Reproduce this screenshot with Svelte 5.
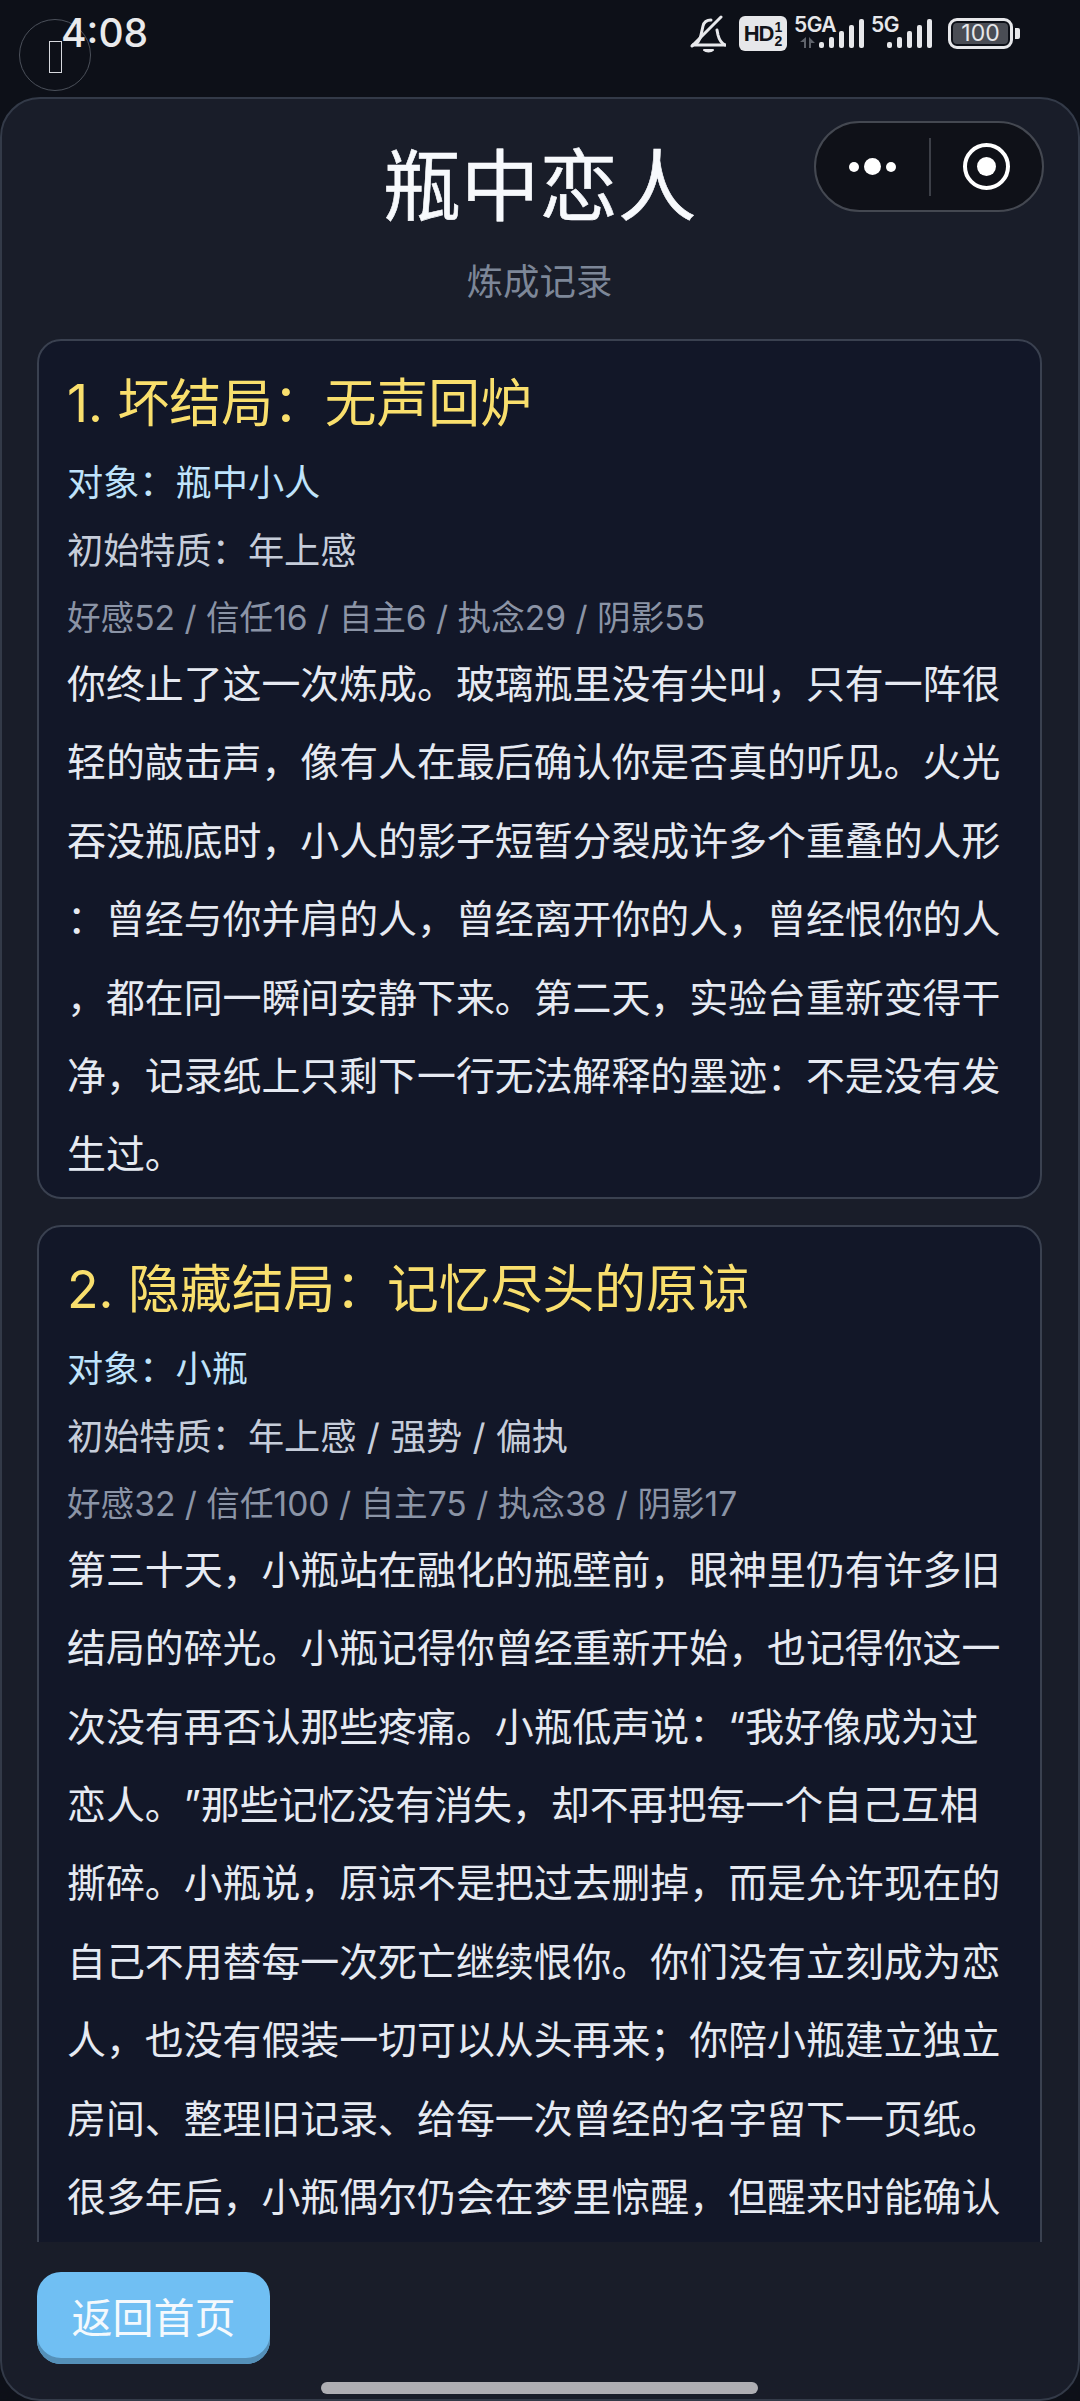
<script>
  const records = [
    {
      title: "1. 坏结局：无声回炉",
      target: "对象：瓶中小人",
      trait: "初始特质：年上感",
      stats: "好感52 / 信任16 / 自主6 / 执念29 / 阴影55",
      body: "你终止了这一次炼成。玻璃瓶里没有尖叫，只有一阵很轻的敲击声，像有人在最后确认你是否真的听见。火光吞没瓶底时，小人的影子短暂分裂成许多个重叠的人形：曾经与你并肩的人，曾经离开你的人，曾经恨你的人，都在同一瞬间安静下来。第二天，实验台重新变得干净，记录纸上只剩下一行无法解释的墨迹：不是没有发生过。"
    },
    {
      title: "2. 隐藏结局：记忆尽头的原谅",
      target: "对象：小瓶",
      trait: "初始特质：年上感 / 强势 / 偏执",
      stats: "好感32 / 信任100 / 自主75 / 执念38 / 阴影17",
      body: "第三十天，小瓶站在融化的瓶壁前，眼神里仍有许多旧结局的碎光。小瓶记得你曾经重新开始，也记得你这一次没有再否认那些疼痛。小瓶低声说：“我好像成为过恋人。”那些记忆没有消失，却不再把每一个自己互相撕碎。小瓶说，原谅不是把过去删掉，而是允许现在的自己不用替每一次死亡继续恨你。你们没有立刻成为恋人，也没有假装一切可以从头再来；你陪小瓶建立独立房间、整理旧记录、给每一次曾经的名字留下一页纸。很多年后，小瓶偶尔仍会在梦里惊醒，但醒来时能确认"
    }
  ];
  const bars = [6, 11, 17, 23, 29];
</script>

<div class="page">
  <div class="status">
    <span class="time">4:08</span>
    <div class="status-right">
      <svg class="bell" width="36" height="38" viewBox="0 0 36 38" fill="none" stroke="#e8e9ec" stroke-width="3" stroke-linecap="round" stroke-linejoin="round">
        <path d="M3 30c4-1 7-5 8-10l2-9c1-4 4-6 8-6" />
        <path d="M27 15l1 5c1 4 3 8 7 10" />
        <path d="M3 30h32" />
        <path d="M14 35c2 2 7 2 9 0z" fill="#e8e9ec" stroke-width="2" />
        <path d="M2 31 31 2" />
      </svg>
      <div class="hd"><span class="hd-t">HD</span><span class="hd-n"><i>1</i><i>2</i></span></div>
      <div class="net wide">
        <span class="net-t">5GA</span>
        <svg class="arrows" width="15" height="11" viewBox="0 0 15 11" fill="#5f636b"><path d="M6 0v11H4V5H0zM9 0v11h2V6h4z" /></svg>
        <div class="bars">
          {#each bars as h}<b style="height:{h}px"></b>{/each}
        </div>
      </div>
      <div class="net narrow">
        <span class="net-t">5G</span>
        <div class="bars">
          {#each bars as h}<b style="height:{h}px"></b>{/each}
        </div>
      </div>
      <div class="battery">
        <div class="cell"><span>100</span></div>
        <div class="nub"></div>
      </div>
    </div>
  </div>

  <div class="float-btn"><span class="tofu"></span></div>

  <div class="capsule">
    <div class="dots"><i></i><i class="big"></i><i></i></div>
    <div class="sep"></div>
    <div class="target"><i></i></div>
  </div>

  <main class="panel">
    <header>
      <h1>瓶中恋人</h1>
      <p class="sub">炼成记录</p>
    </header>

    <div class="list">
      {#each records as r}
        <section class="card">
          <h2>{r.title}</h2>
          <p class="target-line">{r.target}</p>
          <p class="trait">{r.trait}</p>
          <p class="stats">{r.stats}</p>
          <p class="body">{r.body}</p>
        </section>
      {/each}
    </div>

    <footer>
      <button>返回首页</button>
    </footer>
    <div class="home-bar"></div>
  </main>
</div>

<style>
  :global(body) {
    margin: 0;
    background: #0d1018;
    font-family: "Inter", "Noto Sans CJK SC", sans-serif;
    text-spacing-trim: space-all;
  }

  .page {
    position: relative;
    height: 2401px;
    padding-top: 97px;
    box-sizing: border-box;
    overflow: hidden;
    background: #0d1018;
  }

  .status {
    position: absolute;
    top: 0;
    left: 0;
    right: 0;
    height: 60px;
    z-index: 2;
  }

  .time {
    position: absolute;
    left: 61px;
    top: 9px;
    font-size: 39px;
    font-weight: 500;
    line-height: 48px;
    color: #e9eaec;
  }

  .status-right {
    position: absolute;
    left: 690px;
    top: 15px;
    display: flex;
    align-items: flex-start;
  }

  .bell {
    margin-right: 13px;
  }

  .hd {
    width: 48px;
    height: 35px;
    margin: 1px 7px 0 0;
    background: #e6e7ea;
    border-radius: 6px;
    color: #12141b;
    display: flex;
    align-items: center;
    justify-content: center;
    font-family: "Liberation Sans", sans-serif;
    font-weight: 700;
  }

  .hd-t {
    font-size: 22px;
    letter-spacing: -1px;
  }

  .hd-n {
    display: flex;
    flex-direction: column;
    margin-left: 1px;
    font-size: 14px;
    line-height: 14px;
  }

  .hd-n i {
    font-style: normal;
  }

  .net {
    position: relative;
    height: 33px;
    display: flex;
    justify-content: flex-end;
    align-items: flex-end;
  }

  .net.wide {
    width: 70px;
    margin-right: 7px;
  }

  .net.narrow {
    width: 61px;
    margin-right: 16px;
  }

  .net-t {
    position: absolute;
    left: 0;
    top: 0;
    font-size: 21px;
    font-weight: 600;
    line-height: 20px;
    letter-spacing: -0.5px;
    color: #e6e7ea;
  }

  .arrows {
    position: absolute;
    left: 6px;
    bottom: 0;
  }

  .bars {
    display: flex;
    align-items: flex-end;
    gap: 4.5px;
  }

  .bars b {
    width: 5.5px;
    background: #e6e7ea;
    border-radius: 2px;
  }

  .battery {
    display: flex;
    align-items: center;
    height: 34px;
    margin-top: 1px;
  }

  .cell {
    width: 65px;
    height: 31px;
    box-sizing: border-box;
    border: 3px solid #e6e7ea;
    border-radius: 9px;
    padding: 2px;
  }

  .cell span {
    display: block;
    height: 100%;
    background: #4a4d55;
    border-radius: 4px;
    color: #e6e7ea;
    font-size: 23px;
    line-height: 21px;
    text-align: center;
  }

  .nub {
    width: 5px;
    height: 11px;
    margin-left: 2px;
    background: #e6e7ea;
    border-radius: 0 2px 2px 0;
  }

  .float-btn {
    position: absolute;
    left: 19px;
    top: 19px;
    width: 72px;
    height: 72px;
    box-sizing: border-box;
    border: 1px solid #4b505a;
    border-radius: 50%;
    display: flex;
    align-items: center;
    justify-content: center;
    z-index: 1;
  }

  .tofu {
    width: 13px;
    height: 32px;
    margin-top: 4px;
    box-sizing: border-box;
    border: 1.5px solid #d7d9de;
  }

  .capsule {
    position: absolute;
    left: 814px;
    top: 121px;
    width: 230px;
    height: 91px;
    box-sizing: border-box;
    border: 2px solid #444851;
    border-radius: 46px;
    background: #0f1118;
    display: flex;
    align-items: center;
    z-index: 2;
  }

  .dots {
    width: 113px;
    display: flex;
    align-items: center;
    justify-content: center;
    gap: 5px;
  }

  .dots i {
    width: 10px;
    height: 10px;
    background: #fff;
    border-radius: 50%;
  }

  .dots i.big {
    width: 17px;
    height: 17px;
  }

  .sep {
    width: 2px;
    height: 58px;
    background: #3c3f47;
  }

  .target {
    flex: 1;
    display: flex;
    justify-content: center;
  }

  .target i {
    width: 47px;
    height: 47px;
    box-sizing: border-box;
    border: 4px solid #fff;
    border-radius: 50%;
    position: relative;
    display: block;
  }

  .target i::after {
    content: "";
    position: absolute;
    left: 10px;
    top: 10px;
    width: 19px;
    height: 19px;
    background: #fff;
    border-radius: 50%;
  }

  .panel {
    position: relative;
    height: 2304px;
    box-sizing: border-box;
    background: #191d29;
    border: 2px solid #333a48;
    border-radius: 40px;
    display: flex;
    flex-direction: column;
    padding: 0 36px 0 35px;
  }

  header {
    text-align: center;
    flex: none;
    height: 240px;
    padding-top: 40px;
    box-sizing: border-box;
  }

  h1 {
    margin: 0;
    font-size: 78.4px;
    font-weight: 400;
    line-height: 96px;
    color: #f7f9fc;
    -webkit-text-stroke: 0.6px #f7f9fc;
  }

  .sub {
    margin: 22px 0 0;
    font-size: 36.4px;
    line-height: 50px;
    color: #7d8798;
  }

  .list {
    flex: none;
    height: 1903px;
    overflow: hidden;
    display: flex;
    flex-direction: column;
    gap: 26px;
  }

  .card {
    flex: none;
    box-sizing: border-box;
    background: #121728;
    border: 2px solid #3a4150;
    border-radius: 24px;
    padding: 30px 28px 3px;
  }

  /* the last record runs on below the fold of the list */
  .card:last-child {
    padding-bottom: 60px;
  }

  h2 {
    margin: 0;
    font-size: 51.8px;
    font-weight: 400;
    line-height: 64px;
    color: #f9df6d;
  }

  .card p {
    margin: 0;
  }

  .card .target-line {
    margin-top: 23px;
    font-size: 36.2px;
    line-height: 50px;
    color: #bfe3fb;
  }

  .card .trait {
    margin-top: 18px;
    font-size: 36.2px;
    line-height: 50px;
    color: #c6cdda;
  }

  .card .stats {
    margin-top: 17px;
    font-size: 33.6px;
    line-height: 50px;
    color: #8b94a6;
  }

  .card .body {
    margin-top: 2px;
    font-size: 38.9px;
    line-height: 78.4px;
    line-break: anywhere;
    color: #e6eaf2;
  }

  footer {
    flex: 1;
    padding-top: 30px;
  }

  button {
    width: 233px;
    height: 92px;
    border: none;
    border-radius: 24px;
    background: #70bff3;
    box-shadow: inset 0 -6px 0 #5590b8;
    color: #f4f9fd;
    font-family: inherit;
    font-size: 41px;
    padding: 0 0 6px;
  }

  .home-bar {
    position: absolute;
    left: 319px;
    bottom: 5px;
    width: 437px;
    height: 12px;
    border-radius: 6px;
    background: #aeaeb3;
  }
</style>
